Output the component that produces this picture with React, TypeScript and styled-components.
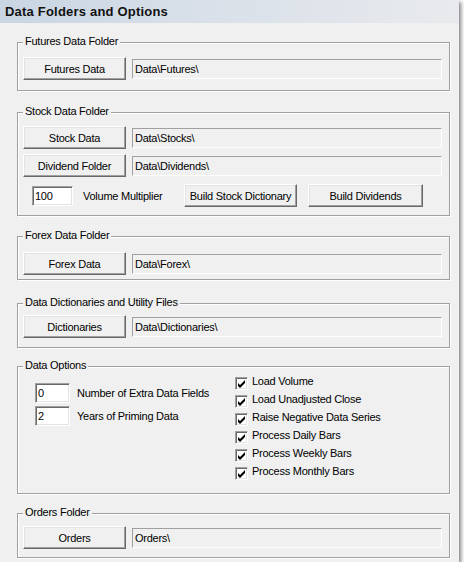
import React from "react";
import styled, { createGlobalStyle } from "styled-components";

const Global = createGlobalStyle`
  html, body { margin: 0; padding: 0; background: #ffffff; }
  body { font-family: "Liberation Sans", Arial, sans-serif; font-size: 11px; color: #000; }
  * { box-sizing: border-box; }
`;

const Window = styled.div`
  width: 459px;
  height: 562px;
  background: #f0f0f0;
  box-shadow: 2px 2px 4px rgba(0, 0, 0, 0.5);
  display: flex;
  flex-direction: column;
`;

const TitleBar = styled.div`
  height: 23px;
  flex: none;
  display: flex;
  align-items: center;
  padding-left: 5px;
  background: linear-gradient(to right, #c9d5e3 0%, #d9e0e9 45%, #e8eaed 100%);
  font-family: "Liberation Sans", Arial, sans-serif;
  font-weight: bold;
  font-size: 13px;
  letter-spacing: 0.2px;
  color: #111;
`;

const Body = styled.div`
  display: flex;
  flex-direction: column;
  padding-left: 17px;
`;

const GroupBox = styled.div<{ $mt: number; $h: number }>`
  margin-top: ${(p) => p.$mt}px;
  width: 433px;
  height: ${(p) => p.$h}px;
  border: 1px solid #a0a0a0;
  box-shadow: inset 1px 1px 0 #ffffff, 1px 1px 0 #ffffff;
  display: flex;
  flex-direction: column;
`;

const Legend = styled.div`
  align-self: flex-start;
  margin: -8px 0 0 5px;
  padding: 0 2px;
  height: 13px;
  line-height: 13px;
  background: #f0f0f0;
  font-size: 11px;
  letter-spacing: -0.25px;
  white-space: nowrap;
`;

const Rows = styled.div<{ $mt: number }>`
  display: flex;
  flex-direction: column;
  gap: 5px;
  margin-top: ${(p) => p.$mt}px;
  padding-left: 5px;
`;

const Row = styled.div`
  display: flex;
  align-items: center;
  gap: 6px;
`;

const Button = styled.div<{ $w?: number; $ml?: number }>`
  width: ${(p) => p.$w ?? 103}px;
  margin-left: ${(p) => p.$ml ?? 0}px;
  height: 23px;
  flex: none;
  display: flex;
  align-items: center;
  justify-content: center;
  background: #f0f0f0;
  border: 1px solid;
  border-color: #ffffff #696969 #696969 #ffffff;
  box-shadow: inset -1px -1px 0 #a0a0a0, inset 1px 1px 0 #e3e3e3;
  font-size: 11px;
  letter-spacing: -0.25px;
  white-space: nowrap;
`;

const PathField = styled.div`
  width: 310px;
  height: 20px;
  flex: none;
  display: flex;
  align-items: center;
  padding-left: 2px;
  border: 1px solid;
  border-color: #a0a0a0 #ffffff #ffffff #a0a0a0;
  font-size: 11px;
  letter-spacing: -0.25px;
  white-space: nowrap;
`;

const EditBox = styled.div<{ $w: number }>`
  width: ${(p) => p.$w}px;
  height: 20px;
  flex: none;
  display: flex;
  align-items: center;
  padding-left: 2px;
  background: #ffffff;
  border: 1px solid;
  border-color: #a0a0a0 #ffffff #ffffff #a0a0a0;
  box-shadow: inset 1px 1px 0 #696969, inset -1px -1px 0 #e3e3e3;
  font-size: 11px;
  letter-spacing: -0.25px;
`;

const Label = styled.span<{ $ml: number; $w?: number }>`
  margin-left: ${(p) => p.$ml}px;
  ${(p) => (p.$w ? `width: ${p.$w}px; flex: none;` : "")}
  font-size: 11px;
  letter-spacing: -0.25px;
  white-space: nowrap;
`;

const VolRow = styled.div`
  display: flex;
  align-items: center;
  margin-top: 2px;
  padding-left: 9px;
`;

const OptionsBody = styled.div`
  display: flex;
  margin-top: 5px;
  padding-left: 17px;
`;

const LeftCol = styled.div`
  width: 200px;
  flex: none;
  display: flex;
  flex-direction: column;
  gap: 3px;
  margin-top: 6px;
`;

const OptRow = styled.div`
  display: flex;
  align-items: center;
`;

const CheckCol = styled.div`
  display: flex;
  flex-direction: column;
  gap: 5px;
`;

const CheckRow = styled.div`
  display: flex;
  align-items: flex-start;
  height: 13px;
  gap: 4px;
`;

const CheckLabel = styled.span`
  font-size: 11px;
  line-height: 9px;
  letter-spacing: -0.25px;
  white-space: nowrap;
`;

const CheckBox = styled.span`
  width: 13px;
  height: 13px;
  flex: none;
  display: block;
  background: #ffffff;
  border: 1px solid;
  border-color: #a0a0a0 #ffffff #ffffff #a0a0a0;
  box-shadow: inset 1px 1px 0 #696969, inset -1px -1px 0 #e3e3e3;
  svg { display: block; }
`;

const Check = () => (
  <CheckBox>
    <svg width="11" height="11" viewBox="0 0 11 11">
      <polygon points="2,5 4,7 9,2 9,5 4,10 2,8" fill="#000" />
    </svg>
  </CheckBox>
);

const FolderRow = ({ button, path }: { button: string; path: string }) => (
  <Row>
    <Button>{button}</Button>
    <PathField>{path}</PathField>
  </Row>
);

const checks = [
  "Load Volume",
  "Load Unadjusted Close",
  "Raise Negative Data Series",
  "Process Daily Bars",
  "Process Weekly Bars",
  "Process Monthly Bars",
];

export default function App() {
  return (
    <>
      <Global />
      <Window>
        <TitleBar>Data Folders and Options</TitleBar>
        <Body>
          <GroupBox $mt={19} $h={49}>
            <Legend>Futures Data Folder</Legend>
            <Rows $mt={9}>
              <FolderRow button="Futures Data" path="Data\Futures\" />
            </Rows>
          </GroupBox>

          <GroupBox $mt={21} $h={104}>
            <Legend>Stock Data Folder</Legend>
            <Rows $mt={8}>
              <FolderRow button="Stock Data" path="Data\Stocks\" />
              <FolderRow button="Dividend Folder" path="Data\Dividends\" />
              <VolRow>
                <EditBox $w={41}>100</EditBox>
                <Label $ml={10} $w={101}>Volume Multiplier</Label>
                <Button $w={113}>Build Stock Dictionary</Button>
                <Button $w={115} $ml={11}>Build Dividends</Button>
              </VolRow>
            </Rows>
          </GroupBox>

          <GroupBox $mt={20} $h={44}>
            <Legend>Forex Data Folder</Legend>
            <Rows $mt={10}>
              <FolderRow button="Forex Data" path="Data\Forex\" />
            </Rows>
          </GroupBox>

          <GroupBox $mt={23} $h={45}>
            <Legend>Data Dictionaries and Utility Files</Legend>
            <Rows $mt={6}>
              <FolderRow button="Dictionaries" path="Data\Dictionaries\" />
            </Rows>
          </GroupBox>

          <GroupBox $mt={18} $h={128}>
            <Legend>Data Options</Legend>
            <OptionsBody>
              <LeftCol>
                <OptRow>
                  <EditBox $w={35}>0</EditBox>
                  <Label $ml={7}>Number of Extra Data Fields</Label>
                </OptRow>
                <OptRow>
                  <EditBox $w={35}>2</EditBox>
                  <Label $ml={7}>Years of Priming Data</Label>
                </OptRow>
              </LeftCol>
              <CheckCol>
                {checks.map((c) => (
                  <CheckRow key={c}>
                    <Check />
                    <CheckLabel>{c}</CheckLabel>
                  </CheckRow>
                ))}
              </CheckCol>
            </OptionsBody>
          </GroupBox>

          <GroupBox $mt={19} $h={45}>
            <Legend>Orders Folder</Legend>
            <Rows $mt={7}>
              <FolderRow button="Orders" path="Orders\" />
            </Rows>
          </GroupBox>
        </Body>
      </Window>
    </>
  );
}
